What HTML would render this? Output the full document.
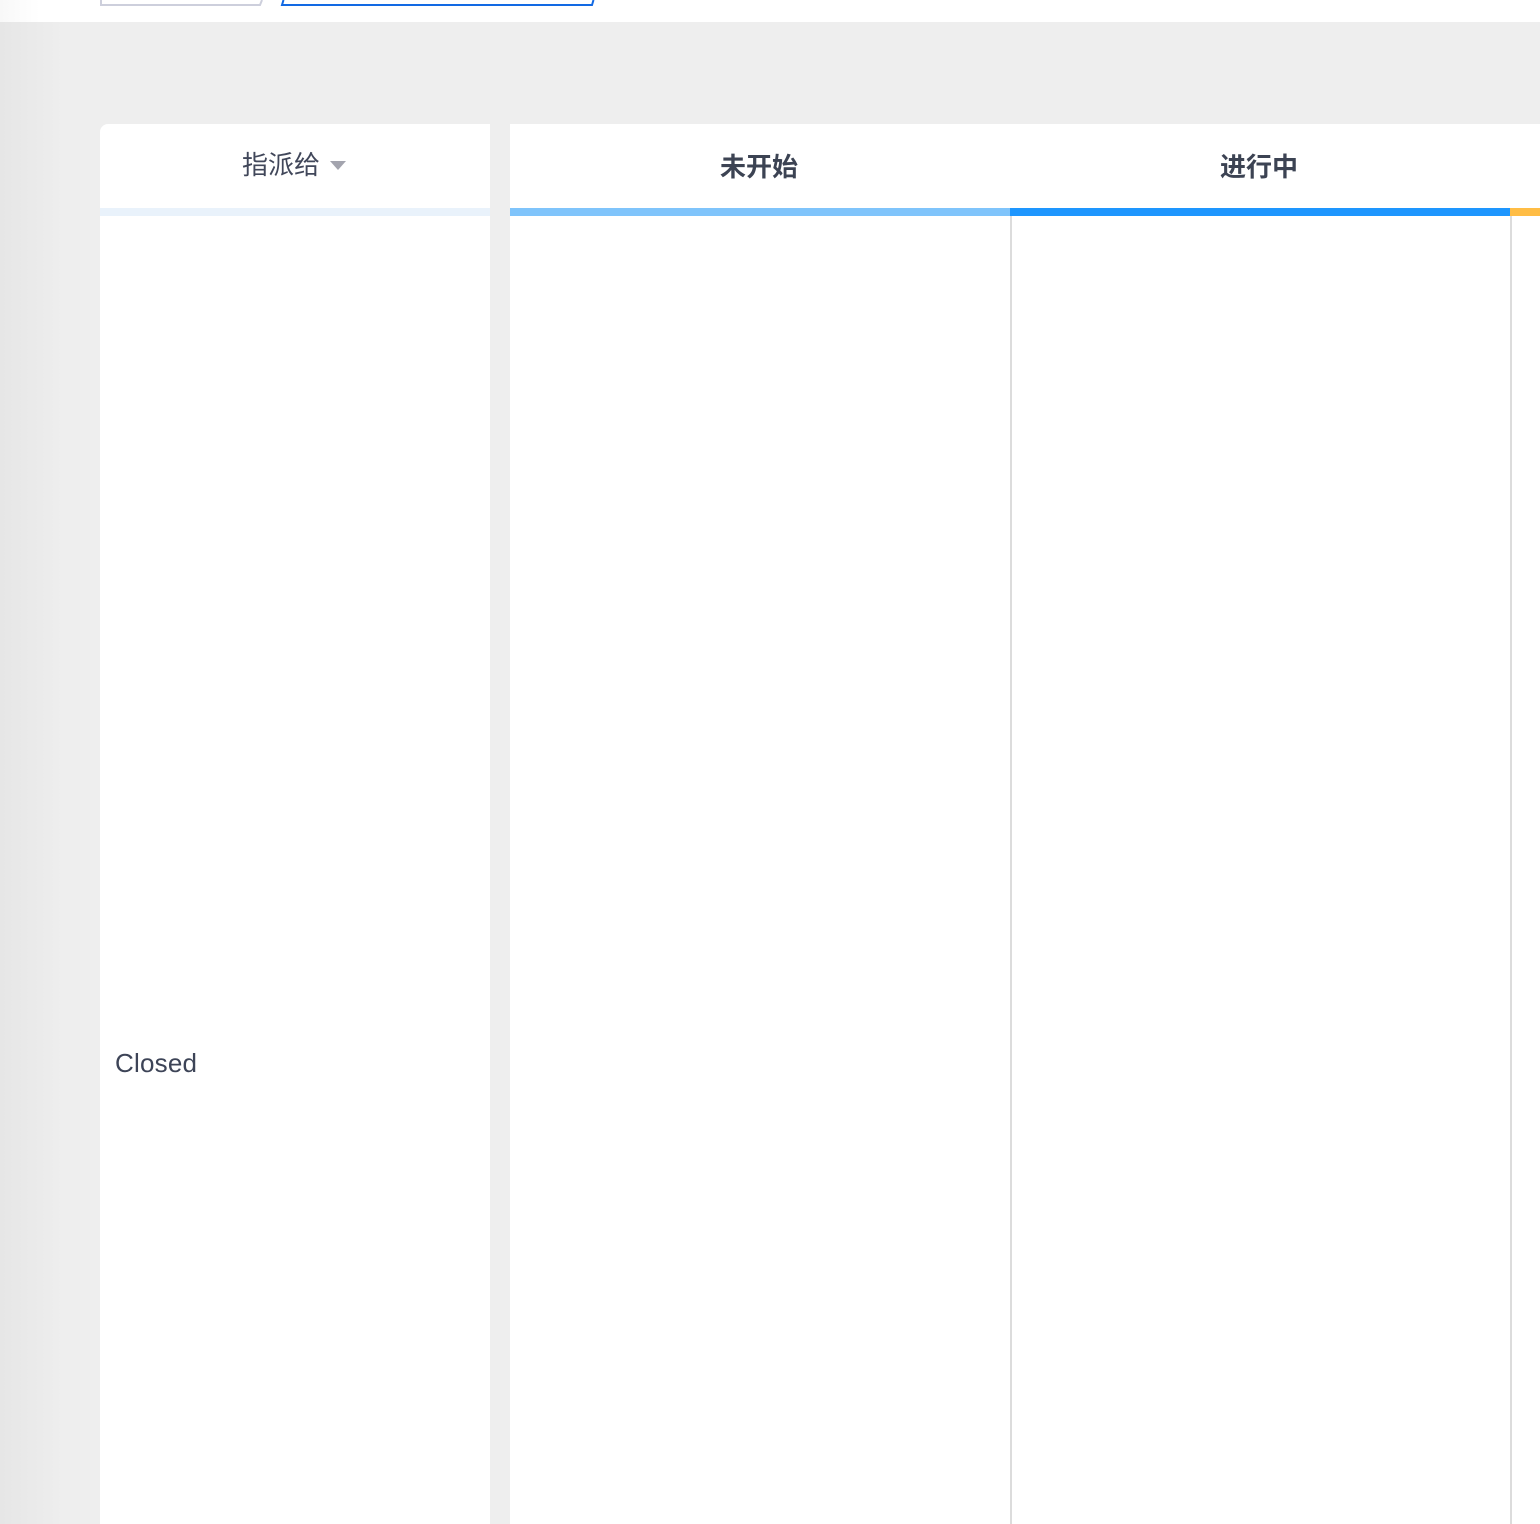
<!DOCTYPE html>
<html lang="zh">
<head>
<meta charset="utf-8">
<title>Board</title>
<style>
html,body{margin:0;padding:0;width:1540px;height:1524px;overflow:hidden;background:#eee;}
body{position:relative;font-family:"Liberation Sans","Noto Sans CJK SC",sans-serif;color:#3c4353;}
div{position:absolute;box-sizing:border-box;}
.t{white-space:nowrap;line-height:36px;font-size:26px;}
</style>
</head>
<body>
<div style="left:0;top:0;width:1540px;height:22px;background:#fff"></div>
<div style="left:0;top:0;width:40px;height:22px;background:linear-gradient(90deg,#f8f8f8,#fff)"></div>
<div style="left:0;top:22px;width:64px;height:1502px;background:linear-gradient(90deg,#e6e6e6,#eeeeee)"></div>

<svg style="position:absolute;left:96px;top:0" width="172" height="8" viewBox="0 0 172 8">
<path d="M5 0V5H164L166 0" fill="none" stroke="#cdcfdc" stroke-width="2"/>
</svg>
<svg style="position:absolute;left:276px;top:0" width="324" height="8" viewBox="0 0 324 8">
<path d="M7.500 0L6 5H316L317.500 0" fill="none" stroke="#1269e3" stroke-width="2"/>
</svg>

<div style="left:100px;top:124px;width:390px;height:1400px;background:#fff;border-top-left-radius:8px"></div>
<div style="left:100px;top:208px;width:390px;height:8px;background:#e9f2fb"></div>
<div class="t" style="left:242px;top:147px;color:#41475a">指派给</div>
<svg style="position:absolute;left:330px;top:161px" width="16" height="10" viewBox="0 0 16 10"><path d="M0 0H16L8 9Z" fill="#a3a4ae"/></svg>
<div class="t" style="left:115px;top:1045px;color:#3d4457;letter-spacing:.2px">Closed</div>

<div style="left:510px;top:124px;width:1030px;height:1400px;background:#fff"></div>
<div style="left:510px;top:208px;width:500px;height:8px;background:#7fc4fb"></div>
<div style="left:1010px;top:208px;width:500px;height:8px;background:#1e96fe"></div>
<div style="left:1510px;top:208px;width:30px;height:8px;background:#ffbd45"></div>
<div style="left:1010px;top:216px;width:2px;height:1308px;background:#dcdcdc"></div>
<div style="left:1510px;top:216px;width:2px;height:1308px;background:#dcdcdc"></div>
<div class="t" style="left:720px;top:149px;font-weight:bold">未开始</div>
<div class="t" style="left:1220px;top:149px;font-weight:bold">进行中</div>
</body>
</html>
